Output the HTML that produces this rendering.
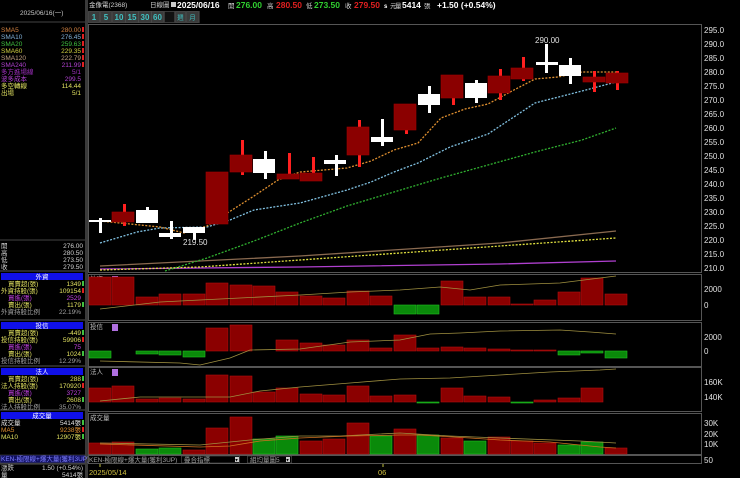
<!DOCTYPE html>
<html><head><meta charset="utf-8"><style>
html,body{margin:0;padding:0;background:#000;width:740px;height:478px;overflow:hidden}
svg{display:block}
text{font-family:"Liberation Sans","Noto Sans CJK TC",sans-serif}
.s{font-size:6.5px}
.ax{font-size:8px;fill:#e0e0e0;font-family:"Liberation Sans",sans-serif}
</style></head><body>
<svg width="740" height="478" viewBox="0 0 740 478" xmlns="http://www.w3.org/2000/svg">
<rect width="740" height="478" fill="#000"/>
<rect x="85" y="0" width="3" height="478" fill="#3a3a3a"/>
<line x1="0" y1="22" x2="85" y2="22" stroke="#444"/>
<text x="20" y="15" class="s" fill="#c8c8c8">2025/06/16(一)</text>
<g class="s">
<text x="1" y="32" fill="#d08040">SMA5</text><text x="81" y="32" text-anchor="end" fill="#d08040">280.00</text>
<text x="1" y="39" fill="#80b0d8">SMA10</text><text x="81" y="39" text-anchor="end" fill="#80b0d8">276.45</text>
<text x="1" y="46" fill="#40c040">SMA20</text><text x="81" y="46" text-anchor="end" fill="#40c040">259.63</text>
<text x="1" y="53" fill="#d0d040">SMA60</text><text x="81" y="53" text-anchor="end" fill="#d0d040">229.35</text>
<text x="1" y="60" fill="#c0a080">SMA120</text><text x="81" y="60" text-anchor="end" fill="#c0a080">222.79</text>
<text x="1" y="67" fill="#b040d0">SMA240</text><text x="81" y="67" text-anchor="end" fill="#b040d0">211.99</text>
<text x="1" y="74" fill="#a030c0">多方進場線</text><text x="81" y="74" text-anchor="end" fill="#a030c0">5/1</text>
<text x="1" y="81" fill="#b040d0">波多成本</text><text x="81" y="81" text-anchor="end" fill="#b040d0">299.5</text>
<text x="1" y="88" fill="#e0e060">多空轉線</text><text x="81" y="88" text-anchor="end" fill="#e0e060">114.44</text>
<text x="1" y="95" fill="#e0e060">出場</text><text x="81" y="95" text-anchor="end" fill="#e0e060">5/1</text>
</g>
<g fill="#e02020"><rect x="82" y="27" width="2" height="5"/><rect x="82" y="34" width="2" height="5"/><rect x="82" y="41" width="2" height="5"/><rect x="82" y="48" width="2" height="5"/><rect x="82" y="55" width="2" height="5"/><rect x="82" y="62" width="2" height="5"/></g>
<line x1="0" y1="240" x2="85" y2="240" stroke="#444"/>
<g class="s" fill="#d0d0d0">
<text x="1" y="248">開</text><text x="83" y="248" text-anchor="end">276.00</text>
<text x="1" y="255">高</text><text x="83" y="255" text-anchor="end">280.50</text>
<text x="1" y="262">低</text><text x="83" y="262" text-anchor="end">273.50</text>
<text x="1" y="269">收</text><text x="83" y="269" text-anchor="end">279.50</text>
</g>
<g fill="#1010e8"><rect x="1" y="273" width="82" height="7"/><rect x="1" y="322" width="82" height="7"/><rect x="1" y="368" width="82" height="7"/><rect x="1" y="412" width="82" height="7"/></g>
<line x1="0" y1="271" x2="85" y2="271" stroke="#555"/><line x1="0" y1="320" x2="85" y2="320" stroke="#555"/><line x1="0" y1="366" x2="85" y2="366" stroke="#555"/><line x1="0" y1="410" x2="85" y2="410" stroke="#555"/>
<g class="s" fill="#fff" text-anchor="middle"><text x="42" y="279">外資</text><text x="42" y="328">投信</text><text x="42" y="374">法人</text><text x="42" y="418">成交量</text></g>
<g class="s">
<text x="8" y="286" fill="#e0e060">買賣超(張)</text><text x="81" y="286" text-anchor="end" fill="#e0e060">1349</text>
<text x="1" y="293" fill="#e0e060">外資持股(張)</text><text x="81" y="293" text-anchor="end" fill="#e0e060">109154</text>
<text x="8" y="300" fill="#c040e0">買進(張)</text><text x="81" y="300" text-anchor="end" fill="#c040e0">2529</text>
<text x="8" y="307" fill="#e0e060">賣出(張)</text><text x="81" y="307" text-anchor="end" fill="#e0e060">1179</text>
<text x="1" y="314" fill="#a0a0a0">外資持股比例</text><text x="81" y="314" text-anchor="end" fill="#a0a0a0">22.19%</text>
<text x="8" y="335" fill="#e0e060">買賣超(張)</text><text x="81" y="335" text-anchor="end" fill="#e0e060">-449</text>
<text x="1" y="342" fill="#e0e060">投信持股(張)</text><text x="81" y="342" text-anchor="end" fill="#e0e060">59906</text>
<text x="8" y="349" fill="#c040e0">買進(張)</text><text x="81" y="349" text-anchor="end" fill="#c040e0">75</text>
<text x="8" y="356" fill="#e0e060">賣出(張)</text><text x="81" y="356" text-anchor="end" fill="#e0e060">1024</text>
<text x="1" y="363" fill="#a0a0a0">投信持股比例</text><text x="81" y="363" text-anchor="end" fill="#a0a0a0">12.29%</text>
<text x="8" y="381" fill="#e0e060">買賣超(張)</text><text x="81" y="381" text-anchor="end" fill="#e0e060">288</text>
<text x="1" y="388" fill="#e0e060">法人持股(張)</text><text x="81" y="388" text-anchor="end" fill="#e0e060">170920</text>
<text x="8" y="395" fill="#c040e0">買進(張)</text><text x="81" y="395" text-anchor="end" fill="#c040e0">3727</text>
<text x="8" y="402" fill="#e0e060">賣出(張)</text><text x="81" y="402" text-anchor="end" fill="#e0e060">2608</text>
<text x="1" y="409" fill="#a0a0a0">法人持股比例</text><text x="81" y="409" text-anchor="end" fill="#a0a0a0">35.07%</text>
<text x="1" y="425" fill="#e0e0e0">成交量</text><text x="81" y="425" text-anchor="end" fill="#e0e0e0">5414張</text>
<text x="1" y="432" fill="#e09030">MA5</text><text x="81" y="432" text-anchor="end" fill="#e09030">9238張</text>
<text x="1" y="439" fill="#e0e060">MA10</text><text x="81" y="439" text-anchor="end" fill="#e0e060">12907張</text>
</g>
<g fill="#40c040"><rect x="82" y="281" width="2" height="5"/><rect x="82" y="302" width="2" height="5"/><rect x="82" y="330" width="2" height="5"/><rect x="82" y="351" width="2" height="5"/><rect x="82" y="376" width="2" height="5"/><rect x="82" y="397" width="2" height="5"/><rect x="82" y="420" width="2" height="5"/><rect x="82" y="434" width="2" height="5"/></g>
<g fill="#e02020"><rect x="82" y="288" width="2" height="5"/><rect x="82" y="337" width="2" height="5"/><rect x="82" y="383" width="2" height="5"/><rect x="82" y="427" width="2" height="5"/></g>
<rect x="0" y="455" width="85" height="8" fill="#101060" stroke="#555" stroke-width="0.5"/>
<text x="1" y="461" class="s" fill="#8080ff">KEN-極限線+爆大量(獲利3UP)</text>
<line x1="0" y1="464" x2="85" y2="464" stroke="#555"/>
<g class="s" fill="#d0d0d0"><text x="1" y="470">漲跌</text><text x="83" y="470" text-anchor="end">1.50 (+0.54%)</text><text x="1" y="477">量</text><text x="83" y="477" text-anchor="end">5414張</text></g>

<text x="89" y="7" class="s" fill="#d0d0d0">金像電(2368)</text>
<text x="150" y="7" class="s" fill="#d0d0d0">日線圖</text>
<rect x="171" y="2" width="5" height="5" fill="#ccc"/>
<g font-size="8.5" font-weight="bold" font-family="Liberation Sans,sans-serif">
<text x="177" y="8" fill="#fff">2025/06/16</text>
<text x="236" y="8" fill="#30d030">276.00</text>
<text x="276" y="8" fill="#e02020">280.50</text>
<text x="314" y="8" fill="#30d030">273.50</text>
<text x="354" y="8" fill="#e02020">279.50</text>
<text x="437" y="8" fill="#fff">+1.50 (+0.54%)</text>
<text x="384" y="8" fill="#fff" font-size="6">s</text>
<text x="402" y="8" fill="#fff">5414</text>
</g>
<g class="s" fill="#d0d0d0"><text x="228" y="8">開</text><text x="267" y="8">高</text><text x="306" y="8">低</text><text x="345" y="8">收</text><text x="390" y="8">元</text><text x="395" y="8">量</text><text x="424" y="8">張</text></g>
<rect x="88" y="11" width="112" height="12" fill="#2a2a2a"/>
<g fill="#3a3a3a" stroke="#555" stroke-width="0.5"><rect x="88.5" y="11.5" width="11" height="11"/><rect x="100.5" y="11.5" width="11" height="11"/><rect x="112.5" y="11.5" width="13" height="11"/><rect x="125.5" y="11.5" width="13" height="11"/><rect x="138.5" y="11.5" width="13" height="11"/><rect x="151.5" y="11.5" width="12" height="11"/><rect x="164.5" y="11.5" width="10" height="11" fill="#111"/><rect x="175.5" y="11.5" width="10" height="11"/><rect x="186.5" y="11.5" width="12" height="11"/></g>
<g font-size="8" font-weight="bold" fill="#40c0c0" text-anchor="middle" font-family="Liberation Sans,sans-serif">
<text x="94" y="20">1</text><text x="106" y="20">5</text><text x="119" y="20">10</text><text x="132" y="20">15</text><text x="145" y="20">30</text><text x="157.5" y="20">60</text></g>
<g class="s" fill="#40c0c0" text-anchor="middle"><text x="180.5" y="19.5">週</text><text x="192.5" y="19.5">月</text></g>

<rect x="88.5" y="24.5" width="613" height="248" fill="none" stroke="#555"/>
<g class="ax">
<text x="704" y="33">295.0</text><text x="704" y="47">290.0</text><text x="704" y="61">285.0</text><text x="704" y="75">280.0</text><text x="704" y="89">275.0</text><text x="704" y="103">270.0</text><text x="704" y="117">265.0</text><text x="704" y="131">260.0</text><text x="704" y="145">255.0</text><text x="704" y="159">250.0</text><text x="704" y="173">245.0</text><text x="704" y="187">240.0</text><text x="704" y="201">235.0</text><text x="704" y="215">230.0</text><text x="704" y="229">225.0</text><text x="704" y="243">220.0</text><text x="704" y="257">215.0</text><text x="704" y="271">210.0</text>
</g>
<g fill="none" stroke-width="1.3">
<polyline stroke="#b040d0" points="100,269 300,267 500,264 616,261"/>
<polyline stroke="#8a6a50" points="100,266 300,256 500,243 616,231"/>
<polyline stroke="#e0e040" stroke-dasharray="2,1.5" points="100,270 200,267 300,260 400,253 500,246 616,238"/>
<polyline stroke="#30b030" stroke-dasharray="2,1.5" points="165,271 207,258 254,241 300,223 347,206 394,192 441,178 488,165 535,152 582,140 616,128"/>
<polyline stroke="#80c0e0" stroke-dasharray="2,1.5" points="100,243 137,232 160,228 207,227 230,220 254,210 300,203 347,190 371,182 394,172 418,163 450,147 488,134 535,103 582,91 616,82"/>
<polyline stroke="#e09030" stroke-dasharray="2,1.5" points="100,221 160,227 184,233 207,226 254,196 278,180 300,172 347,168 371,161 394,150 418,143 441,118 465,109 488,104 512,91 535,79 558,77 582,72 616,72"/>
</g>
<g fill="#ff2020">
<rect x="123" y="204" width="3" height="22"/><rect x="217" y="172" width="3" height="52"/><rect x="241" y="140" width="3" height="35"/><rect x="288" y="153" width="3" height="26"/><rect x="312" y="157" width="3" height="24"/><rect x="358" y="120" width="3" height="47"/><rect x="405" y="104" width="3" height="30"/><rect x="452" y="75" width="3" height="30"/><rect x="499" y="69" width="3" height="31"/><rect x="522" y="57" width="3" height="24"/><rect x="593" y="71" width="3" height="21"/><rect x="616" y="71" width="3" height="19"/>
</g>
<g fill="#8b0000" stroke="#a00000" stroke-width="0.6">
<rect x="112" y="212" width="22" height="10"/><rect x="206" y="172" width="22" height="52"/><rect x="230" y="155" width="22" height="17"/><rect x="277" y="174" width="22" height="5"/><rect x="300" y="173" width="22" height="8"/><rect x="347" y="127" width="22" height="28"/><rect x="394" y="104" width="22" height="26"/><rect x="441" y="75" width="22" height="23"/><rect x="488" y="76" width="22" height="17"/><rect x="511" y="68" width="22" height="11"/><rect x="583" y="77" width="22" height="5"/><rect x="606" y="73" width="22" height="10"/>
</g>
<g fill="#fff">
<rect x="99" y="218" width="3" height="15"/><rect x="89" y="220" width="22" height="2"/>
<rect x="146" y="207" width="3" height="16"/><rect x="136" y="210" width="22" height="13"/>
<rect x="170" y="221" width="3" height="18"/><rect x="159" y="233" width="22" height="4"/>
<rect x="193" y="227" width="3" height="13"/><rect x="183" y="227" width="22" height="6"/>
<rect x="264" y="151" width="3" height="28"/><rect x="253" y="159" width="22" height="14"/>
<rect x="335" y="155" width="3" height="21"/><rect x="324" y="160" width="22" height="4"/>
<rect x="381" y="119" width="3" height="27"/><rect x="371" y="137" width="22" height="5"/>
<rect x="428" y="86" width="3" height="27"/><rect x="418" y="94" width="22" height="11"/>
<rect x="475" y="80" width="3" height="23"/><rect x="465" y="83" width="22" height="15"/>
<rect x="545" y="44" width="3" height="29"/><rect x="536" y="62" width="22" height="3"/>
<rect x="569" y="58" width="3" height="26"/><rect x="559" y="65" width="22" height="11"/>
</g>
<text x="535" y="43" font-size="8" fill="#e0e0e0" font-family="Liberation Sans,sans-serif">290.00</text>
<text x="183" y="245" font-size="8" fill="#e0e0e0" font-family="Liberation Sans,sans-serif">219.50</text>

<g fill="none" stroke="#555"><rect x="88.5" y="274.5" width="613" height="46"/><rect x="88.5" y="322.5" width="613" height="44"/><rect x="88.5" y="367.5" width="613" height="44"/><rect x="88.5" y="413.5" width="613" height="41"/></g>
<g class="s" fill="#c0c0c0"><text x="90" y="281">外資</text><text x="90" y="329">投信</text><text x="90" y="374">法人</text><text x="90" y="420">成交量</text></g>
<g fill="#b070e0"><rect x="112" y="276" width="6" height="7"/><rect x="112" y="324" width="6" height="7"/><rect x="112" y="369" width="6" height="7"/></g>
<g class="ax"><text x="704" y="292">2000</text><text x="704" y="308">0</text><text x="704" y="340">2000</text><text x="704" y="354">0</text><text x="704" y="385">160K</text><text x="704" y="400">140K</text><text x="704" y="426">30K</text><text x="704" y="437">20K</text><text x="704" y="447">10K</text><text x="704" y="463">50</text></g>

<g stroke-width="0.6">
<g fill="#8b0000" stroke="#b01010">
<rect x="89" y="277" width="22" height="28"/><rect x="112" y="277" width="22" height="28"/><rect x="136" y="297" width="22" height="8"/><rect x="159" y="294" width="22" height="11"/><rect x="183" y="294" width="22" height="11"/><rect x="206" y="283" width="22" height="22"/><rect x="230" y="285" width="22" height="20"/><rect x="253" y="286" width="22" height="19"/><rect x="276" y="292" width="22" height="13"/><rect x="300" y="296" width="22" height="9"/><rect x="323" y="298" width="22" height="7"/><rect x="347" y="291" width="22" height="14"/><rect x="370" y="296" width="22" height="9"/><rect x="441" y="281" width="22" height="24"/><rect x="464" y="297" width="22" height="8"/><rect x="488" y="297" width="22" height="8"/><rect x="511" y="304" width="22" height="1"/><rect x="534" y="300" width="22" height="5"/><rect x="558" y="292" width="22" height="13"/><rect x="581" y="278" width="22" height="27"/><rect x="605" y="294" width="22" height="11"/>
</g>
<g fill="#0a8a0a" stroke="#20c020"><rect x="394" y="305" width="22" height="9"/><rect x="417" y="305" width="22" height="9"/></g>
<g fill="#8b0000" stroke="#b01010">
<rect x="206" y="328" width="22" height="23"/><rect x="230" y="325" width="22" height="26"/><rect x="276" y="340" width="22" height="11"/><rect x="300" y="343" width="22" height="8"/><rect x="323" y="345" width="22" height="6"/><rect x="347" y="340" width="22" height="11"/><rect x="370" y="348" width="22" height="3"/><rect x="394" y="335" width="22" height="16"/><rect x="417" y="348" width="22" height="3"/><rect x="441" y="347" width="22" height="4"/><rect x="464" y="348" width="22" height="3"/><rect x="488" y="349" width="22" height="2"/><rect x="511" y="350" width="22" height="1"/><rect x="534" y="350" width="22" height="1"/>
</g>
<g fill="#0a8a0a" stroke="#20c020">
<rect x="89" y="351" width="22" height="7"/><rect x="136" y="351" width="22" height="3"/><rect x="159" y="351" width="22" height="4"/><rect x="183" y="351" width="22" height="6"/><rect x="558" y="351" width="22" height="4"/><rect x="581" y="351" width="22" height="2"/><rect x="605" y="351" width="22" height="7"/>
</g>
<g fill="#8b0000" stroke="#b01010">
<rect x="89" y="388" width="22" height="14"/><rect x="112" y="386" width="22" height="16"/><rect x="136" y="399" width="22" height="3"/><rect x="159" y="398" width="22" height="4"/><rect x="183" y="399" width="22" height="3"/><rect x="206" y="375" width="22" height="27"/><rect x="230" y="376" width="22" height="26"/><rect x="253" y="392" width="22" height="10"/><rect x="276" y="388" width="22" height="14"/><rect x="300" y="394" width="22" height="8"/><rect x="323" y="395" width="22" height="7"/><rect x="347" y="386" width="22" height="16"/><rect x="370" y="396" width="22" height="6"/><rect x="394" y="395" width="22" height="7"/><rect x="441" y="388" width="22" height="14"/><rect x="464" y="396" width="22" height="6"/><rect x="488" y="397" width="22" height="5"/><rect x="534" y="400" width="22" height="2"/><rect x="558" y="398" width="22" height="4"/><rect x="581" y="388" width="22" height="14"/>
</g>
<g fill="#0a8a0a" stroke="#20c020"><rect x="417" y="402" width="22" height="1"/><rect x="511" y="402" width="22" height="1"/></g>
<g fill="#8b0000" stroke="#b01010">
<rect x="89" y="443" width="22" height="11"/><rect x="112" y="442" width="22" height="12"/><rect x="183" y="450" width="22" height="4"/><rect x="206" y="428" width="22" height="26"/><rect x="230" y="417" width="22" height="37"/><rect x="300" y="441" width="22" height="13"/><rect x="323" y="439" width="22" height="15"/><rect x="347" y="423" width="22" height="31"/><rect x="394" y="429" width="22" height="25"/><rect x="441" y="438" width="22" height="16"/><rect x="488" y="437" width="22" height="17"/><rect x="511" y="441" width="22" height="13"/><rect x="534" y="443" width="22" height="11"/><rect x="605" y="448" width="22" height="6"/>
</g>
<g fill="#0a8a0a" stroke="#20c020">
<rect x="136" y="449" width="22" height="5"/><rect x="159" y="448" width="22" height="6"/><rect x="253" y="439" width="22" height="15"/><rect x="276" y="436" width="22" height="18"/><rect x="370" y="436" width="22" height="18"/><rect x="417" y="435" width="22" height="19"/><rect x="464" y="441" width="22" height="13"/><rect x="558" y="445" width="22" height="9"/><rect x="581" y="442" width="22" height="12"/>
</g>
</g>
<g fill="none" stroke-width="0.8">
<polyline stroke="#a09040" points="100,309 160,302 200,300 300,295 350,292 400,290 440,287 470,290 500,285 560,283 600,278 616,276"/>
<polyline stroke="#a09040" points="100,361 180,363 200,365 230,358 250,350 300,349 350,342 400,340 430,334 460,333 500,331 560,330 590,332 616,334"/>
<polyline stroke="#a09040" points="100,401 140,397 200,397 230,397 260,391 300,387 350,383 400,379 450,378 500,375 550,372 600,370 616,369"/>
<polyline stroke="#a09040" points="100,443 200,445 250,440 300,436 340,436 400,433 450,436 500,438 580,441 616,443"/>
<polyline stroke="#d07020" points="100,444 200,447 230,446 260,441 300,438 350,436 400,435 420,435 470,438 500,440 550,442 600,447 616,448"/>
</g>
<rect x="88.5" y="455.5" width="613" height="8" fill="#000" stroke="#555"/>
<text x="89" y="462" class="s" fill="#a0a0a0">KEN-極限線+爆大量(獲利3UP)</text>
<rect x="181.5" y="456" width="58" height="7" fill="#000" stroke="#666" stroke-width="0.5"/><text x="184" y="462" class="s" fill="#a0a0a0">疊合指標</text>
<rect x="235" y="457" width="4" height="5" fill="#ccc"/><text x="235.3" y="461.5" font-size="5" fill="#000">▾</text>
<rect x="240.5" y="456" width="0" height="0"/>
<rect x="247.5" y="456" width="44" height="7" fill="#000" stroke="#666" stroke-width="0.5"/><text x="250" y="462" class="s" fill="#a0a0a0">組均量圖5</text>
<rect x="286" y="457" width="4" height="5" fill="#ccc"/><text x="286.3" y="461.5" font-size="5" fill="#000">▾</text>
<line x1="100" y1="464" x2="100" y2="467" stroke="#c0c040"/>
<line x1="383" y1="464" x2="383" y2="467" stroke="#c0c040"/>
<text x="89" y="475" font-size="7.5" fill="#d0c040" font-family="Liberation Sans,sans-serif">2025/05/14</text>
<text x="378" y="475" font-size="7.5" fill="#d0c040" font-family="Liberation Sans,sans-serif">06</text>
</svg></body></html>
